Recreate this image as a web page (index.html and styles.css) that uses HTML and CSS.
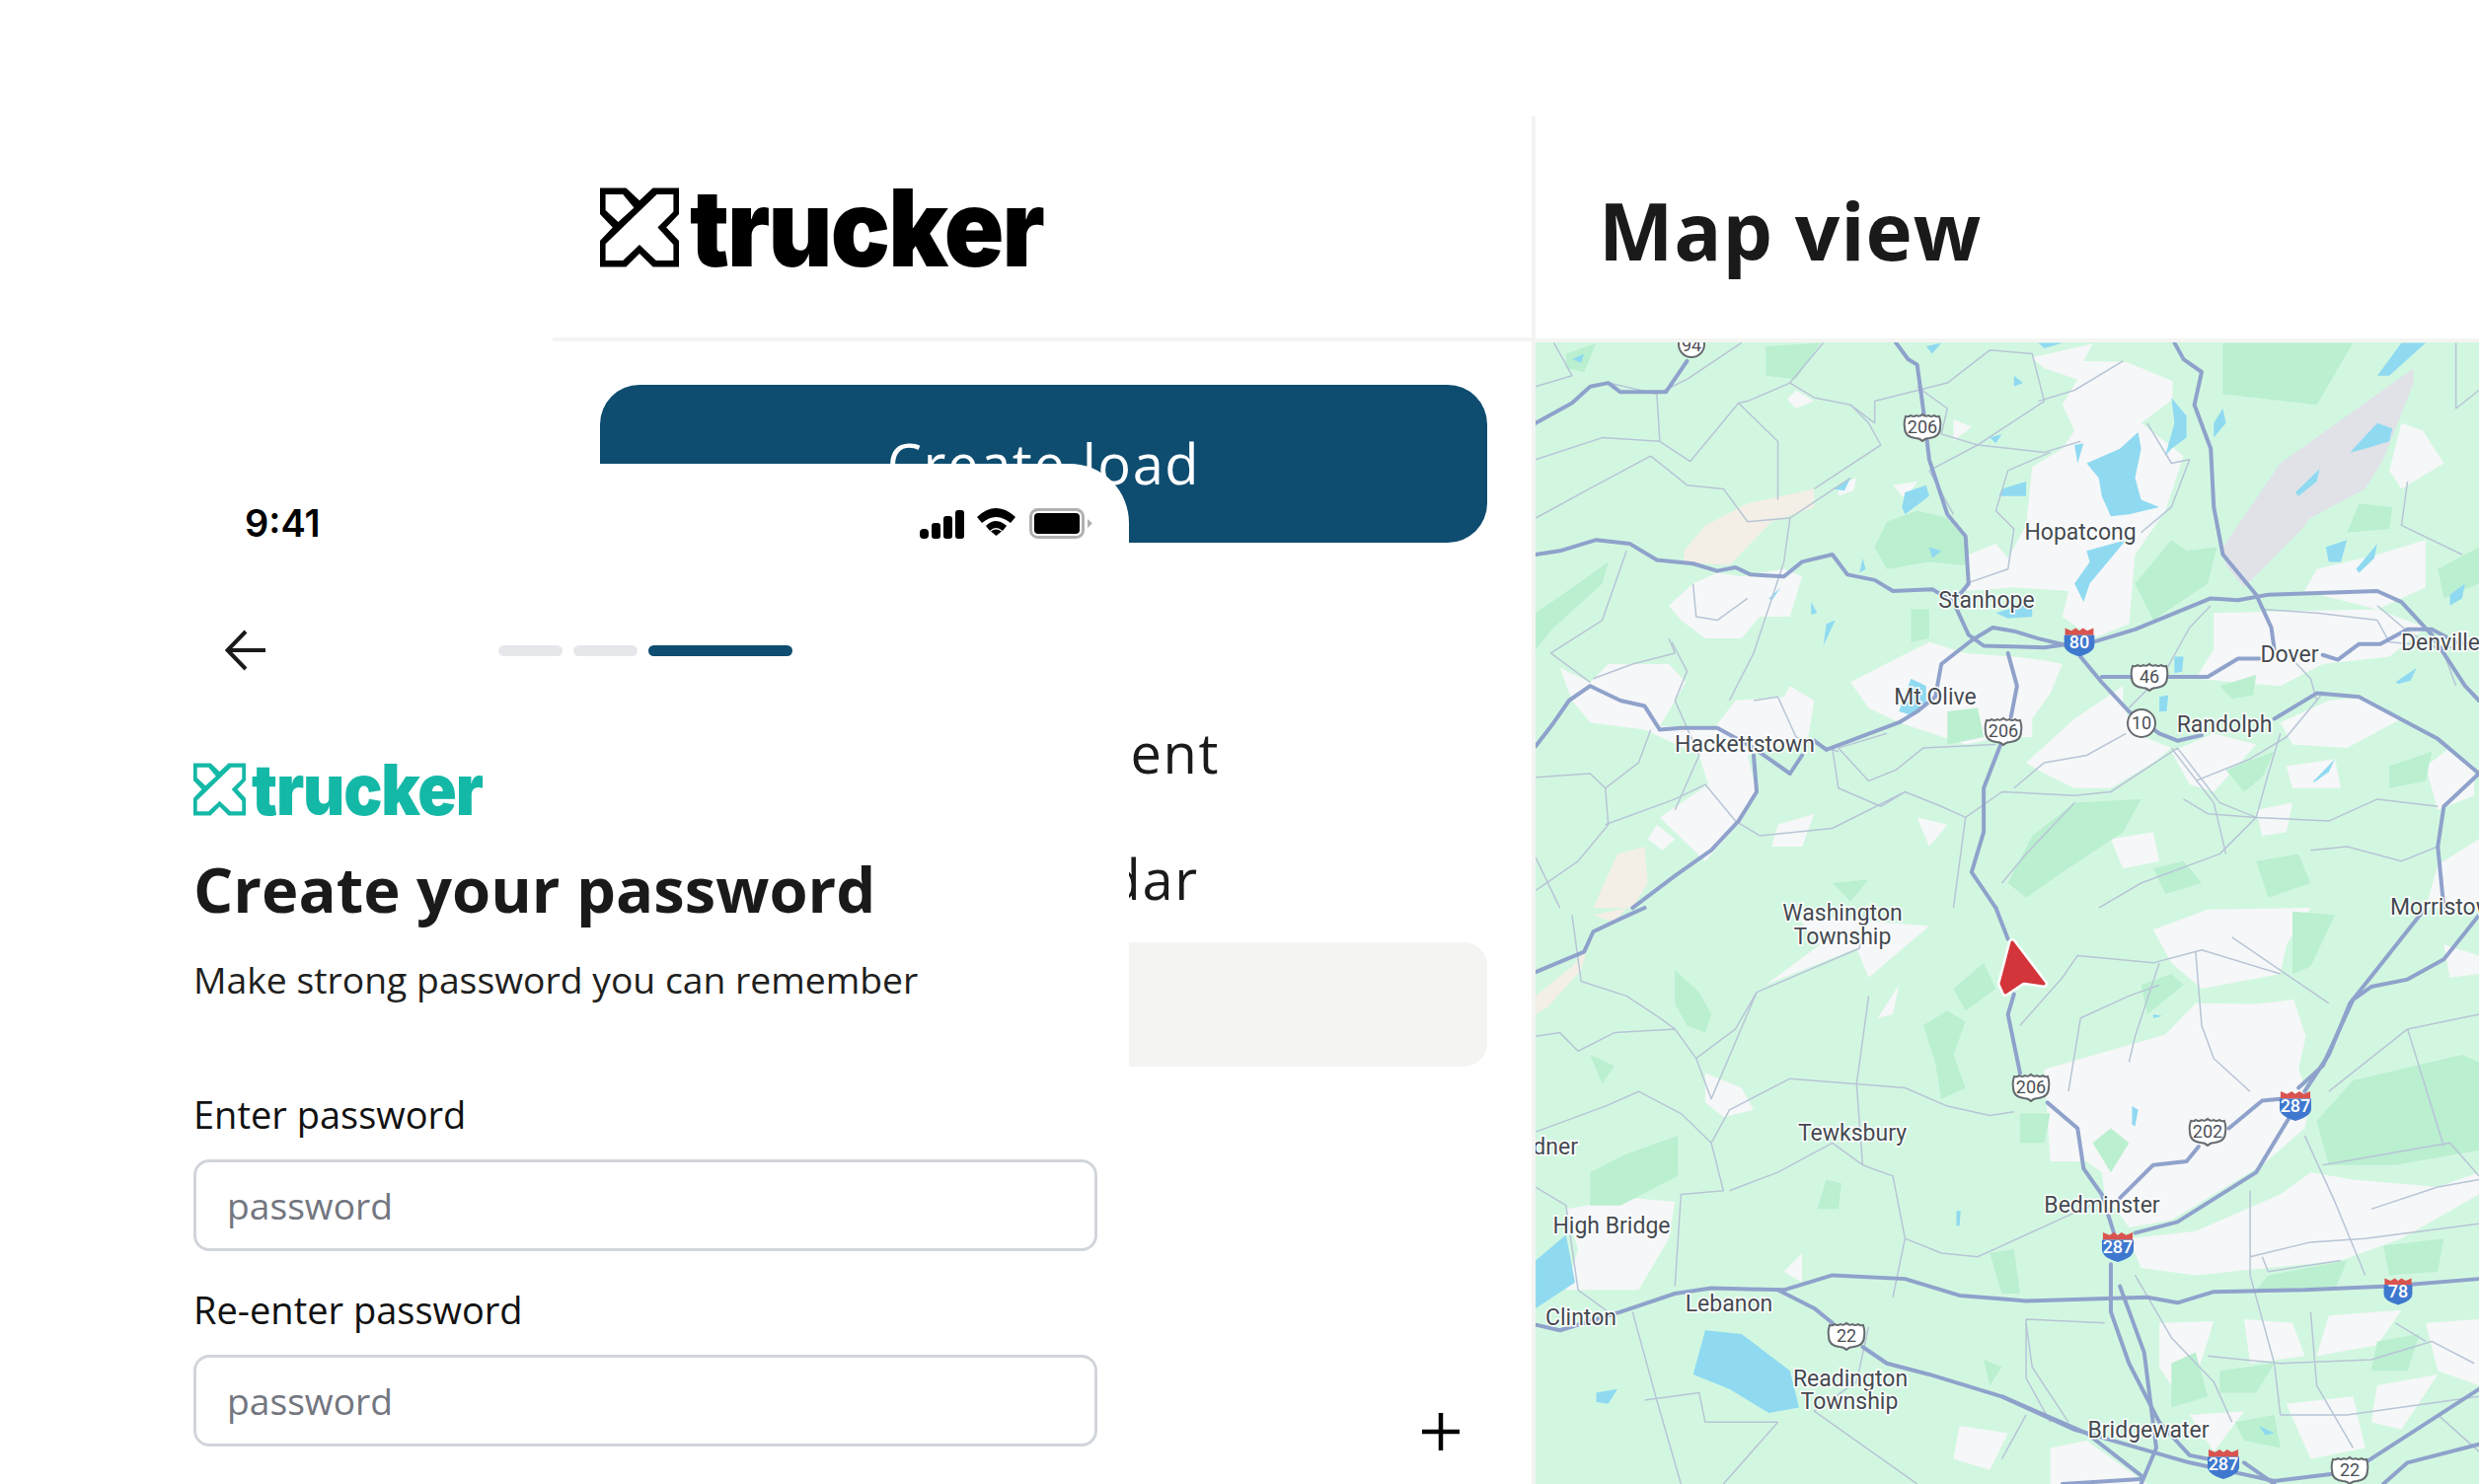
FILE: index.html
```html
<!DOCTYPE html>
<html>
 <head>
  <meta charset="utf-8">
  <title>Xtrucker - Map view</title>
  <link rel="stylesheet" href="styles.css">
 </head>
 <body>
  <div class="stage">
   <div class="desktop">
    <aside class="sidebar">
     <div class="side-head">
      <div class="logo logo-big">
       <svg class="logo-mark" viewBox="0 0 100 100"><path fill-rule="evenodd" d="M0 0H33L50 16L67 0H100V33L84 50L100 67V100H67L50 83L33 100H0V67L16 50L0 33ZM7 8V28L23 43L43 25L29 8ZM72 8L7 71V92H29L50 72L71 92H93V72L73 50L93 30V8Z"/></svg>
       <span class="logo-word">trucker</span>
      </div>
     </div>
     <div class="side-body">
      <a class="create-btn">Create load</a>
      <ul class="side-nav">
       <li class="nav-row"><svg class="nav-icon" viewBox="0 0 48 48"><circle cx="24" cy="24" r="18"/></svg>Equipment</li>
       <li class="nav-row nav-cal"><svg class="nav-icon" viewBox="0 0 48 48"><rect x="8" y="10" width="32" height="30" rx="4"/></svg>Calendar</li>
       <li class="nav-card"></li>
      </ul>
      <div class="add-row">
       <svg class="add-icon" viewBox="0 0 38 38"><path d="M0 19H38M19 0V38"/></svg>
      </div>
     </div>
    </aside>

    <main class="mapview">
     <div class="map-head"><h1>Map view</h1></div>
     <svg class="map" viewBox="1556 347 956 1157" preserveAspectRatio="none">
      <defs>
       <symbol id="us" viewBox="0 0 40 30">
        <path d="M3 4 Q6 5 8 3 Q11 5 14 3 Q17 5 20 2 Q23 5 26 3 Q29 5 32 3 Q34 5 37 4 Q39 10 38 15 Q38 25 27 26 Q23 26 20 29 Q17 26 13 26 Q2 25 2 15 Q1 10 3 4Z"/>
       </symbol>
       <symbol id="inter" viewBox="0 0 40 34">
        <path class="sh-red" d="M4 1L11 4L16 1L20 4L24 1L29 4L36 1V9H4Z"/>
        <path class="sh-blue" d="M3 9H37V20Q37 28 20 33Q3 28 3 20Z"/>
       </symbol>
      </defs>

      <rect class="m-bg" x="1556" y="347" width="956" height="1157"/>

      <g class="m-art" transform="translate(1550 340) scale(.6135 .37)">
       <g class="m-urban">
        <path d="M830 60L930 22L915 70L985 72L1062 125L1062 175L1010 240L1080 330L1050 480L1000 600L990 790L930 830L880 770L890 700L800 690L720 700L725 600L770 570L790 610L820 520L830 360L880 310L900 260L880 190L905 120L850 90Z"/>
        <path d="M230 740L270 680L310 650L350 660L420 640L450 660L430 770L380 770L350 830L290 830L250 780Z"/>
        <path d="M50 910L100 950L130 900L230 900L258 950L215 1070L305 1075L340 1000L420 990L430 960L470 1000L460 1100L360 1150L375 1250L350 1330L290 1440L215 1320L295 1230L280 1150L190 1080L100 1060L70 1000Z"/>
        <path d="M530 950L600 890L660 840L720 870L800 880L850 890L880 900L860 980L830 1050L830 1100L780 1100L720 1120L610 1060L560 1020Z"/>
        <path d="M820 1170L900 1050L980 960L980 1010L1000 1090L1060 1130L1030 1170L960 1240L900 1240L850 1200Z"/>
        <path d="M1130 760L1400 750L1480 800L1420 880L1310 900L1240 960L1100 940L1130 860Z"/>
        <path d="M1440 240L1475 260L1510 350L1440 420L1420 370Z"/>
        <path d="M1300 640L1400 600L1480 560L1480 690L1400 750L1280 700Z"/>
        <path d="M1060 1140L1130 1090L1200 1120L1130 1250L1090 1230Z"/>
        <path d="M1240 1060L1320 1000L1380 990L1440 1050L1350 1130L1260 1120Z"/>
        <path d="M1480 1180L1520 1130L1560 1180L1560 1260L1500 1300Z"/>
        <path d="M1250 1180L1330 1160L1340 1240L1260 1240Z"/>
        <path d="M440 150L470 180L440 200L425 175Z"/>
        <path d="M410 1340L470 1310L450 1400L400 1400Z"/>
        <path d="M1500 1450L1568 1380V1568H1480Z"/>
        <path d="M210 1340L240 1380L220 1410L195 1380Z"/>
        <path d="M600 410L640 400L620 450Z"/>
        <path d="M700 230L730 250L700 290Z"/>
        <path d="M510 410L540 390L535 425L510 440Z"/>
        <path d="M1200 1300L1260 1280L1250 1360L1210 1370Z"/>
        <path d="M640 1320L690 1340L660 1400Z"/>
        <path d="M960 1380L1030 1360L1040 1440L980 1460Z"/>
       </g>
       <g class="m-green">
        <path d="M1145 20L1360 20L1300 190L1145 160Z"/>
        <path d="M390 30L480 20L440 120L390 110Z"/>
        <path d="M570 580L590 510L640 480L690 500L720 560L720 630L660 620L590 640Z"/>
        <path d="M1000 680L1060 560L1085 590L1135 580L1120 680L1030 780Z"/>
        <path d="M1370 460L1425 470L1420 530L1350 540Z"/>
        <path d="M790 1500L830 1370L900 1280L1010 1270L980 1360L880 1470L820 1540Z"/>
        <path d="M10 760L80 680L130 620L120 680L40 800L10 860Z"/>
        <path d="M1420 1180L1490 1140L1480 1220L1420 1240Z"/>
        <path d="M1150 1190L1230 1140L1210 1210L1180 1250Z"/>
        <path d="M690 1030L740 1020L750 1100L690 1120Z"/>
        <path d="M630 750L660 750L660 830L630 840Z"/>
        <path d="M1140 960L1200 930L1195 985L1160 995Z"/>
        <path d="M1500 640L1568 580V680L1510 720Z"/>
        <path d="M1200 1440L1270 1420L1290 1500L1220 1540Z"/>
        <path d="M1030 1460L1080 1440L1110 1500L1050 1530Z"/>
        <path d="M500 1500L560 1490L530 1550Z"/>
        <path d="M60 50L110 20L90 100L60 90Z"/>
       </g>
       <path class="m-tan" d="M255 590L290 520L360 460L470 420L470 470L400 510L330 630L255 620Z"/>
       <path class="m-tan" d="M105 1568L145 1420L190 1400L195 1500L170 1568Z"/>
       <path class="m-ridge" d="M1145 580L1240 350L1460 90L1460 130L1410 340L1380 420L1290 500L1270 540L1180 690L1150 630Z"/>
       <g class="m-water">
        <path d="M920 350L975 310L1005 265L1010 310L1000 390L1010 450L1040 470L990 490L960 495L945 440L940 390Z"/>
        <path d="M920 590L985 560L960 610L945 640L925 680L915 730L900 680L925 620Z"/>
        <path d="M1060 170L1085 220L1085 280L1060 310L1050 330L1065 240Z"/>
        <path d="M1400 240L1425 255L1420 290L1380 310L1355 320Z"/>
        <path d="M1420 110L1480 20L1440 20L1400 110Z"/>
        <path d="M620 430L655 410L660 440L620 490L615 470Z"/>
        <path d="M780 420L820 400L820 440L775 440Z"/>
        <path d="M1315 580L1350 560L1340 620L1320 620Z"/>
        <path d="M1365 640L1400 570L1395 610L1370 650Z"/>
        <path d="M1065 880L1080 880L1078 920L1065 925Z"/>
        <path d="M770 760L830 730L830 770L790 775Z"/>
        <path d="M610 1030L630 940L655 960L655 1010L630 1040Z"/>
        <path d="M500 420L530 390L520 425Z"/>
        <path d="M395 720L415 690L400 725Z"/>
        <path d="M465 730L475 760L465 765Z"/>
        <path d="M1145 200L1150 240L1130 280L1130 240Z"/>
        <path d="M1265 430L1305 365L1300 400L1270 440Z"/>
        <path d="M1520 710L1545 680L1540 720L1520 740Z"/>
        <path d="M1430 950L1465 910L1455 945L1435 955Z"/>
        <path d="M1295 1220L1330 1160L1320 1195L1295 1225Z"/>
        <path d="M1040 990L1055 985L1052 1030L1040 1030Z"/>
        <path d="M70 65L90 50L85 75Z"/>
        <path d="M760 280L780 270L770 295Z"/>
        <path d="M490 790L505 780L485 850Z"/>
        <path d="M900 300L915 295L905 350Z"/>
        <path d="M550 610L555 640L545 650Z"/>
        <path d="M660 580L680 590L665 610Z"/>
        <path d="M800 110L815 130L800 140Z"/>
        <path d="M655 30L680 20L665 50Z"/>
        <path d="M840 20L880 20L850 35Z"/>
       </g>
       <g class="m-minor">
        <path d="M40 20L70 110L10 140M130 130L210 160L215 290L265 345L345 185L410 290L410 450M215 290L120 280L10 340M345 185L360 180L430 130L485 20"/>
        <path d="M210 160L260 120L350 20M200 330L110 410L10 500M200 330L260 410L320 420L360 510L430 500L530 390M430 130L470 170L530 190L570 240L570 180L690 130L760 40L830 50L850 180L740 300L660 370"/>
        <path d="M430 500L420 620L370 870L330 1000M160 590L120 780L35 870L100 950M230 830L240 870L170 900L105 940M530 190L560 240L580 300L470 420M840 180L900 150L980 70"/>
        <path d="M10 1210L100 1200L125 1240L130 1340L80 1440L10 1520M200 1080L180 1170L125 1240M125 1340L240 1270L290 1230L340 1330L380 1370L500 1350L620 1250L680 1290L720 1320M500 1130L510 1240L580 1290L620 1250"/>
        <path d="M605 1190L560 1220L510 1130L590 1090M605 1190L650 1130L770 1120M800 1240L850 1170L920 1150L985 1090M720 1320L780 1250L900 1260L960 1250L1070 1130L1140 1280L1200 1320L1320 1330L1400 1270L1500 1290"/>
        <path d="M780 1500L820 1420L900 1280M1080 1270L1120 1310L1200 1320L1220 1200L1240 1090M1290 1410L1350 1400L1440 1440L1500 1400M1200 1320L1140 1420L1010 1500L940 1568M700 1568L720 1320"/>
        <path d="M1125 740L1090 800L1050 920L990 1020M860 320L790 370L770 480L800 530L790 640L720 680M1020 240L1060 350L1090 340L1060 470L1010 540M1210 750L1300 760L1400 780L1420 840L1560 860"/>
        <path d="M1400 740L1450 810L1510 870L1530 960M1250 870L1290 940L1300 1000M1310 980L1250 1100L1190 1160L1100 1220M1060 1130L1130 1280L1150 1420M1450 400L1440 520L1540 600M1530 20L1530 200L1568 150"/>
        <path d="M10 1430L50 1568M235 840L260 920L240 1000L280 1150L240 1300M370 1000L410 990L440 1100L510 1140M270 680L275 770L310 780L360 720"/>
        <path d="M660 370L700 490M640 140L690 200L680 270L740 300L850 320L910 290"/>
       </g>
       <g class="m-road">
        <path d="M10 600L50 590L110 560L165 570L210 615L270 625L310 645L340 635L365 655L420 660L450 620L500 600L525 655L570 670L600 700L665 695L700 730L725 820L750 850L850 855L890 845"/>
        <path d="M930 840L1000 805L1125 720L1170 725L1220 710L1400 700L1440 730L1490 820"/>
        <path d="M605 20L625 65L640 80L650 200L660 340L690 490L720 550L725 680L700 730"/>
        <path d="M10 240L70 185L100 140L130 130L150 155L225 155L260 70"/>
        <path d="M1065 20L1080 65L1110 100L1098 190L1125 310L1130 470L1145 600L1200 710L1225 800L1230 860"/>
        <path d="M890 850L840 830L800 810L765 800L730 835L680 900L670 990L640 1030L610 1060L490 1135L470 1110"/>
        <path d="M10 1125L40 1060L65 1000L100 960L150 1000L190 1015L215 1080L250 1075L310 1075L370 1130L430 1200L450 1150"/>
        <path d="M370 1150L375 1250L345 1330L300 1410L240 1480L170 1568"/>
        <path d="M790 870L805 960L795 1045"/>
        <path d="M778 1120L750 1240L750 1360L730 1470L770 1568"/>
        <path d="M910 880L945 950L990 1030L1040 1090L1070 1110L1110 1095"/>
        <path d="M945 935L1120 935L1170 885L1205 885"/>
        <path d="M1310 875L1335 888L1370 845L1405 845L1450 805L1490 805L1530 840L1568 850"/>
        <path d="M1230 1050L1300 980L1370 990L1500 1105L1568 1200L1510 1290L1500 1400L1510 1568"/>
        <path d="M1490 820L1545 960L1568 1000"/>
       </g>
      </g>

      <g class="m-art" transform="translate(1550 920) scale(.6135 .3724)">
       <g class="m-urban">
        <path d="M850 440L1050 345L1100 260L1200 262L1262 250L1282 350L1270 440L1290 530L1280 600L1210 700L1060 850L990 870L950 780L945 720L920 690L860 690Z"/>
        <path d="M1030 60L1120 5L1290 0L1250 100L1240 180L1110 220L1060 150Z"/>
        <path d="M990 900L1100 880L1240 780L1290 720L1360 740L1500 760L1568 720V780L1440 900L1340 960L1220 980L1100 1000L1010 980Z"/>
        <path d="M1040 1130L1130 1125L1110 1230L1080 1350L1040 1250Z"/>
        <path d="M1180 1120L1260 1130L1280 1220L1190 1240Z"/>
        <path d="M1320 1110L1440 1095L1400 1190L1300 1220Z"/>
        <path d="M1480 1130L1568 1120V1300L1500 1260Z"/>
        <path d="M1250 1350L1360 1330L1380 1470L1290 1500Z"/>
        <path d="M1090 1380L1180 1370L1130 1480Z"/>
        <path d="M1400 1300L1500 1270L1440 1420L1390 1400Z"/>
        <path d="M860 1470L920 1450L1020 1568H860Z"/>
        <path d="M60 820L170 790L240 800L230 900L180 1040L60 1040L80 930Z"/>
        <path d="M290 450L350 490L370 550L320 570L290 530Z"/>
        <path d="M390 210L480 100L440 20L660 50L560 190L540 110Z"/>
        <path d="M1510 100L1568 130V180L1520 190Z"/>
        <path d="M420 990L450 940L450 1020Z"/>
        <path d="M575 300L610 210L600 290Z"/>
        <path d="M710 1410L790 1430L760 1530L700 1500Z"/>
       </g>
       <g class="m-green">
        <path d="M1300 580L1360 470L1540 400L1568 420V660L1430 700L1320 700Z"/>
        <path d="M650 320L690 280L720 310L700 400L720 490L680 520L670 420Z"/>
        <path d="M240 170L280 230L300 290L290 340L260 320L240 260Z"/>
        <path d="M100 720L160 670L245 620L245 730L150 810L100 810Z"/>
        <path d="M930 640L960 600L990 640L960 720Z"/>
        <path d="M1260 10L1330 20L1290 160L1260 180Z"/>
        <path d="M1010 210L1060 180L1080 210L1020 290Z"/>
        <path d="M700 220L750 150L770 220L720 280Z"/>
        <path d="M100 400L140 430L120 480Z"/>
        <path d="M490 740L515 750L510 820L475 820Z"/>
        <path d="M760 940L800 930L810 1050L780 1050Z"/>
        <path d="M1140 1260L1230 1240L1200 1320L1140 1320Z"/>
        <path d="M1400 1180L1470 1160L1450 1260L1390 1260Z"/>
        <path d="M1060 1240L1100 1210L1120 1330L1060 1360Z"/>
        <path d="M1220 1000L1350 960L1330 1040L1200 1040Z"/>
        <path d="M1165 1400L1230 1380L1240 1470L1180 1450Z"/>
        <path d="M810 560L860 560L850 640L810 640Z"/>
        <path d="M750 1230L780 1250L760 1300Z"/>
        <path d="M1410 920L1510 900L1500 990L1420 1000Z"/>
       </g>
       <path class="m-tan" d="M10 240L70 160L95 110L85 170L30 270L10 290Z"/>
       <path class="m-tan" d="M105 20L160 0L140 40Z"/>
       <g class="m-water">
        <path d="M270 1270L290 1150L350 1160L430 1260L445 1360L395 1375L330 1310Z"/>
        <path d="M10 960L60 890L75 1020L10 1090Z"/>
        <path d="M995 540L1005 550L1000 595L995 590Z"/>
        <path d="M705 825L712 825L710 865L705 865Z"/>
        <path d="M110 1320L145 1310L130 1350L110 1345Z"/>
        <path d="M1030 290L1045 295L1030 300Z"/>
        <path d="M1205 1410L1230 1430L1215 1435Z"/>
       </g>
       <g class="m-minor">
        <path d="M70 20L85 200L160 240L215 300L240 330L275 410L300 520L375 230L545 110L555 0M375 230L340 330L275 410M10 350L50 340L80 390L140 340L240 330M10 610L125 540L180 500L250 560L300 640L320 770L250 780L240 1030"/>
        <path d="M300 640L330 550L430 465L620 490L690 540L760 565L800 555M560 240L540 480L550 700L600 730L620 900L600 1060M330 770L410 720L500 640L550 700M10 760L60 810L80 1040L130 1100M620 900L680 940L740 950L940 800"/>
        <path d="M170 1100L210 1340L250 1568M190 1340L280 1320L290 1400L410 1400L320 1568M560 1140L540 1290L470 1370L640 1568M820 1130L830 1250L890 1400M810 320L880 190L905 130L1030 150L1110 115L1240 180M890 500L910 300L990 240L1040 210"/>
        <path d="M1040 150L1000 350L990 420M1100 120L1110 320L1130 410L1190 500M1160 80L1240 170L1320 260M1310 700L1520 640L1568 730M1320 500L1450 330L1568 290M1450 330L1510 650M1280 620L1330 800L1380 1000M1390 820L1500 760L1568 740"/>
        <path d="M1190 950L1290 910L1380 900L1568 860M1210 950L1220 990L1340 960M1190 770L1190 1000L1230 1240L1240 1380L1350 1380L1568 1330M1290 1100L1300 1300L1360 1470M1240 1240L1390 1230L1490 1180L1560 1240M1430 1130L1480 1180M1120 1220L1240 1240"/>
        <path d="M1000 1000L1060 1170L1130 1290L1160 1400M1500 1380L1568 1480M820 1380L780 1500M950 1130L820 1120L820 1280L860 1400"/>
       </g>
       <g class="m-road">
        <path d="M10 175L90 120L105 65L150 30L190 0"/>
        <path d="M770 0L790 85"/>
        <path d="M800 235L790 290L810 450"/>
        <path d="M855 530L905 600L915 710L945 780L965 885"/>
        <path d="M975 790L1030 700L1085 690L1105 650"/>
        <path d="M1155 600L1210 525L1240 520"/>
        <path d="M1000 885L1070 855L1200 720L1255 570"/>
        <path d="M1270 490L1310 430L1360 250L1390 215L1450 195L1510 140L1568 20"/>
        <path d="M1280 500L1320 400L1355 260L1480 0"/>
        <path d="M10 1135L50 1150L150 1100L240 1050L300 1035L420 1040L500 1000L620 1010L710 1055L820 1070L1020 1060L1070 1075L1130 1045L1280 1040L1420 1030L1568 1010"/>
        <path d="M960 970L960 1100L990 1240L1040 1400L1090 1490L1150 1510"/>
        <path d="M975 1030L1015 1210L1035 1470L1010 1568"/>
        <path d="M410 1040L470 1090L500 1130"/>
        <path d="M550 1195L590 1240L660 1270L780 1330L920 1430L1010 1545"/>
        <path d="M780 1330L900 1420L1090 1510L1230 1560L1330 1540"/>
        <path d="M1380 1510L1568 1310"/>
        <path d="M1410 1568L1450 1510L1568 1460"/>
        <path d="M880 1568L1010 1555"/>
        <path d="M1180 1510L1230 1568"/>
       </g>
      </g>

      <g class="m-labels">
       <text x="2108" y="547">Hopatcong</text>
       <text x="2013" y="616">Stanhope</text>
       <text x="1961" y="714">Mt Olive</text>
       <text x="1768" y="762">Hackettstown</text>
       <text x="2320" y="671">Dover</text>
       <text x="2473" y="659">Denville</text>
       <text x="2254" y="742">Randolph</text>
       <text x="2422" y="927" class="lb-start">Morristown</text>
       <text x="1867" y="933">Washington</text>
       <text x="1867" y="957">Township</text>
       <text x="1877" y="1156">Tewksbury</text>
       <text x="2130" y="1229">Bedminster</text>
       <text x="1599" y="1170" class="lb-end">Gardner</text>
       <text x="1633" y="1250">High Bridge</text>
       <text x="1602" y="1343">Clinton</text>
       <text x="1752" y="1329">Lebanon</text>
       <text x="1875" y="1405">Readington</text>
       <text x="1874" y="1428">Township</text>
       <text x="2177" y="1457">Bridgewater</text>
      </g>

      <g class="m-shields">
       <use href="#us" x="1928" y="418" width="40" height="30"/>
       <use href="#us" x="2010" y="726" width="40" height="30"/>
       <use href="#us" x="2038" y="1087" width="40" height="30"/>
       <use href="#us" x="2158" y="671" width="40" height="30"/>
       <use href="#us" x="2217" y="1132" width="40" height="30"/>
       <use href="#us" x="1851" y="1339" width="40" height="30"/>
       <use href="#us" x="2361" y="1475" width="40" height="30"/>
       <circle cx="1714" cy="349" r="13"/>
       <circle cx="2170" cy="733" r="14"/>
      </g>
      <g class="m-inter">
       <use href="#inter" x="2089" y="635" width="36" height="32"/>
       <use href="#inter" x="2127" y="1248" width="38" height="32"/>
       <use href="#inter" x="2307" y="1105" width="38" height="32"/>
       <use href="#inter" x="2234" y="1468" width="38" height="32"/>
       <use href="#inter" x="2413" y="1293" width="34" height="32"/>
      </g>
      <g class="m-nums">
       <text x="1948" y="439">206</text>
       <text x="2030" y="747">206</text>
       <text x="2058" y="1108">206</text>
       <text x="2178" y="692">46</text>
       <text x="2237" y="1153">202</text>
       <text x="1871" y="1360">22</text>
       <text x="2381" y="1496">22</text>
       <text x="1714" y="356">94</text>
       <text x="2170" y="739">10</text>
      </g>
      <g class="m-nums m-nums-w">
       <text x="2107" y="657">80</text>
       <text x="2146" y="1270">287</text>
       <text x="2326" y="1127">287</text>
       <text x="2253" y="1490">287</text>
       <text x="2430" y="1315">78</text>
      </g>

      <path class="m-pin-edge" d="M2039 955L2071 997L2050 994L2032 1006L2028 997Z"/>
      <path class="m-pin" d="M2039 955L2071 997L2050 994L2032 1006L2028 997Z"/>
     </svg>
    </main>
   </div>

   <div class="phone">
    <div class="status-bar">
     <span class="clock">9:41</span>
     <div class="status-icons">
      <svg class="ic-signal" viewBox="0 0 45 29"><rect x="0" y="19" width="9" height="10" rx="4"/><rect x="12" y="13" width="9" height="16" rx="3"/><rect x="24" y="6" width="9" height="23" rx="3"/><rect x="36" y="0" width="9" height="29" rx="3"/></svg>
      <svg class="ic-wifi" viewBox="0 0 39 28"><path d="M0 9Q19 -9 39 9L34 15Q19 3 5 15Z"/><path d="M9 18Q19 8 30 18L26 23Q19 17 13 23Z"/><path d="M14 23.500Q19 19.500 25 23.500L19.500 28Z"/></svg>
      <svg class="ic-battery" viewBox="0 0 64 31"><rect class="bat-shell" x="1.500" y="1.500" width="53" height="28" rx="7"/><rect x="5" y="5" width="46" height="21" rx="4"/><path class="bat-cap" d="M59 11L64 15.500L59 20Z"/></svg>
     </div>
    </div>

    <div class="phone-nav">
     <svg class="back-arrow" viewBox="0 0 42 42"><path d="M41 21H3M21 2L2.500 21L21 40"/></svg>
     <div class="steps">
      <span class="step"></span>
      <span class="step"></span>
      <span class="step step-on"></span>
     </div>
    </div>

    <div class="phone-body">
     <div class="logo logo-small">
      <svg class="logo-mark" viewBox="0 0 100 100"><path fill-rule="evenodd" d="M0 0H33L50 16L67 0H100V33L84 50L100 67V100H67L50 83L33 100H0V67L16 50L0 33ZM7 8V28L23 43L43 25L29 8ZM72 8L7 71V92H29L50 72L71 92H93V72L73 50L93 30V8Z"/></svg>
      <span class="logo-word">trucker</span>
     </div>
     <h2>Create your password</h2>
     <p class="sub">Make strong password you can remember</p>
     <label class="field-label first">Enter password</label>
     <input class="field" type="password" placeholder="password">
     <label class="field-label">Re-enter password</label>
     <input class="field" type="password" placeholder="password">
    </div>
   </div>
  </div>
 </body>
</html>
```

FILE: styles.css
```css
* { box-sizing: border-box; }
html, body { margin: 0; padding: 0; background: #fff; }
body { font-family: "Open Sans", sans-serif; color: #1a1a1b; }

.stage {
  position: relative;
  width: 2512px;
  height: 1504px;
  overflow: hidden;
  padding: 118px 0 0 560px;
}
.desktop { display: flex; height: 100%; }

/* left panel */
.sidebar {
  width: 996px;
  border-right: 4px solid #f4f4f2;
  display: flex;
  flex-direction: column;
}
.side-head {
  height: 228px;
  border-bottom: 4px solid #f4f4f2;
  padding-left: 48px;
  display: flex;
  align-items: center;
}
.side-body { padding: 44px 45px 0 48px; }

.logo { display: flex; align-items: flex-end; }
.logo-mark { display: block; flex: none; }
.logo-word {
  font-family: "Inter", sans-serif;
  font-weight: 900;
  display: block;
  transform-origin: left bottom;
}
.logo-big { height: 81px; color: #000; }
.logo-big .logo-mark { width: 80px; height: 81px; margin-right: 11px; fill: #000; }
.logo-big .logo-word { font-size: 108px; line-height: 81px; transform: scaleX(.926); height: 81px; letter-spacing: -2px; }
.logo-small { height: 54px; color: #14b8a6; }
.logo-small .logo-mark { width: 53px; height: 54px; margin-right: 6px; fill: #14b8a6; }
.logo-small .logo-word { font-size: 72px; line-height: 54px; transform: scaleX(.906); height: 54px; letter-spacing: -1.300px; }

.create-btn {
  display: block;
  height: 160px;
  line-height: 158px;
  border-radius: 40px;
  background: #0e4d70;
  color: #fff;
  font-size: 56px;
  letter-spacing: 1.600px;
  text-align: center;
}
.side-nav { list-style: none; margin: 149px 0 0; padding: 0; }
.nav-row {
  height: 128px;
  padding-bottom: 3px;
  display: flex;
  align-items: center;
  justify-content: center;
  gap: 9px;
  font-size: 56px;
  letter-spacing: 1.600px;
}
.nav-cal { gap: 19px; }
.nav-icon { width: 48px; height: 48px; fill: none; stroke: #1a1a1b; stroke-width: 3; }
.nav-card { height: 126px; border-radius: 24px; background: #f4f4f2; }
.add-row { display: flex; justify-content: flex-end; padding: 351px 28px 0 0; }
.add-icon { width: 38px; height: 38px; fill: none; stroke: #000; stroke-width: 4.500; display: block; }

/* right panel */
.mapview { flex: 1; display: flex; flex-direction: column; min-width: 0; }
.map-head {
  height: 229px;
  border-bottom: 4px solid #f4f4f2;
  padding: 5px 0 0 64px;
  display: flex;
  align-items: center;
  flex: none;
}
.map-head h1 { margin: 0; font-size: 80px; font-weight: 700; line-height: 1; letter-spacing: .9px; color: #1a1a1b; }
.map { display: block; width: 956px; height: 1157px; flex: none; }

.m-bg { fill: #d2f7e1; }
.m-art { filter: blur(.6px); }
.m-urban { fill: #f6f7f8; }
.m-green { fill: #baefd0; }
.m-tan { fill: #f3efe6; }
.m-ridge { fill: #e0e2e8; }
.m-water { fill: #8fdaf1; }
.m-minor path { fill: none; stroke: #b7c5d6; stroke-width: 1.500px; vector-effect: non-scaling-stroke; stroke-linejoin: round; }
.m-road path { fill: none; stroke: #8fa2cb; stroke-width: 4px; vector-effect: non-scaling-stroke; stroke-linejoin: round; stroke-linecap: round; }
.m-labels text {
  font-family: "Roboto", sans-serif;
  font-size: 23px;
  fill: #444a50;
  text-anchor: middle;
  stroke: #fff;
  stroke-width: 3px;
  paint-order: stroke;
}
.m-labels .lb-start { text-anchor: start; }
.m-labels .lb-end { text-anchor: end; }
.m-shields { fill: #fff; stroke: #666b70; stroke-width: 2px; }
.m-inter { stroke: none; }
.sh-red { fill: #d9534f; }
.sh-blue { fill: #3f78cf; }
.m-nums text {
  font-family: "Roboto", sans-serif;
  font-size: 18px;
  fill: #4a4f55;
  text-anchor: middle;
}
.m-nums-w text { fill: #fff; font-weight: 500; }
.m-pin-edge { fill: #fff; stroke: #fff; stroke-width: 8px; stroke-linejoin: round; }
.m-pin { fill: #d3353a; stroke: #d3353a; stroke-width: 3px; stroke-linejoin: round; }

/* phone over the panels */
.phone {
  position: absolute;
  left: 164px;
  top: 470px;
  width: 980px;
  height: 1034px;
  background: #fff;
  border-radius: 60px 60px 0 0;
  overflow: hidden;
}
.status-bar {
  display: flex;
  justify-content: space-between;
  align-items: flex-start;
  padding: 43px 37px 0 84px;
  height: 168px;
}
.clock { font-family: "Inter", sans-serif; font-weight: 600; font-size: 38px; line-height: 34px; color: #000; }
.status-icons { display: flex; align-items: flex-start; padding-top: 2px; }
.ic-signal { width: 45px; height: 29px; margin-top: 2px; fill: #000; }
.ic-wifi { width: 39px; height: 28px; margin-left: 13px; fill: #000; }
.ic-battery { width: 64px; height: 31px; margin-left: 14px; fill: #000; }
.bat-shell { fill: none; stroke: #b0b0b0; stroke-width: 3; }
.bat-cap { fill: #b0b0b0; }

.phone-nav {
  display: grid;
  grid-template-columns: 1fr auto 1fr;
  align-items: center;
  height: 42px;
  padding: 0 64px;
}
.back-arrow { width: 42px; height: 42px; fill: none; stroke: #1a1a1b; stroke-width: 4; display: block; }
.steps { display: flex; gap: 11px; }
.step { width: 65px; height: 11px; border-radius: 6px; background: #e5e7eb; }
.step-on { width: 146px; background: #0e4d70; }

.phone-body { padding: 93px 32px 0; }
.phone-body h2 { margin: 32px 0 0; font-size: 63.300px; font-weight: 700; line-height: 84px; color: #1a1a1b; }
.sub { margin: 24px 0 0; font-size: 37.300px; line-height: 52px; color: #1f1f20; }
.field-label { display: block; font-size: 38px; font-weight: 500; line-height: 52px; color: #111; margin-top: 33px; }
.field-label.first { margin-top: 84px; }
.field {
  display: block;
  width: 100%;
  height: 93px;
  margin-top: 20px;
  border: 3px solid #d1d5db;
  border-radius: 16px;
  padding: 0 31px;
  font-family: "Open Sans", sans-serif;
  font-size: 37.200px;
  background: #fff;
}
.field::placeholder { color: #73767f; opacity: 1; }
```
